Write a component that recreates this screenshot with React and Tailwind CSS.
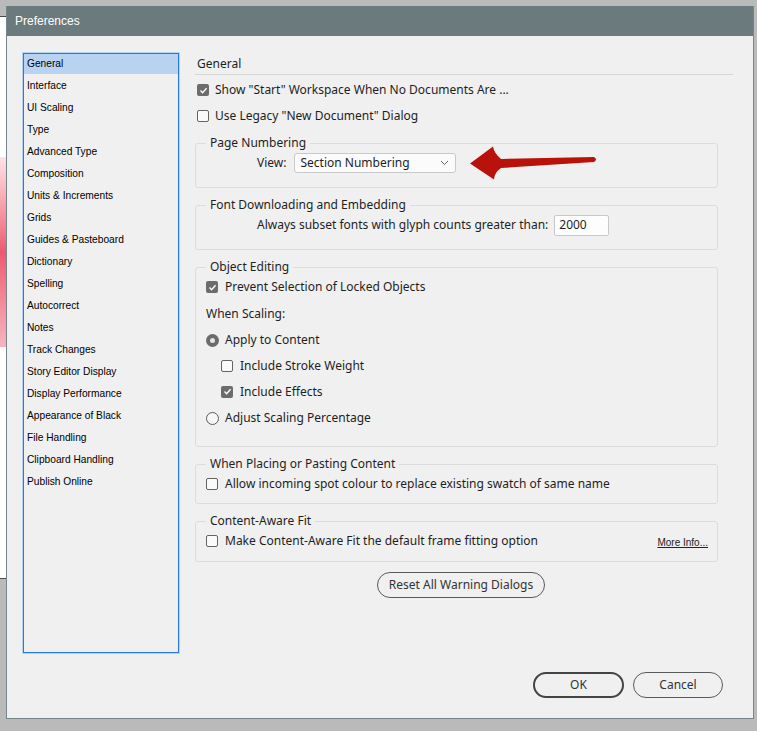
import React, { useState } from "react";

const sections = [
  "General",
  "Interface",
  "UI Scaling",
  "Type",
  "Advanced Type",
  "Composition",
  "Units & Increments",
  "Grids",
  "Guides & Pasteboard",
  "Dictionary",
  "Spelling",
  "Autocorrect",
  "Notes",
  "Track Changes",
  "Story Editor Display",
  "Display Performance",
  "Appearance of Black",
  "File Handling",
  "Clipboard Handling",
  "Publish Online",
];

const Check = ({ checked }) =>
  checked ? (
    <span className="w-[12px] h-[12px] rounded-[2px] bg-[#6c6c6c] flex items-center justify-center shrink-0">
      <svg width="9" height="9" viewBox="0 0 9 9">
        <path d="M1.5 4.6 L3.6 6.7 L7.6 2.2" fill="none" stroke="#fff" strokeWidth="1.4" />
      </svg>
    </span>
  ) : (
    <span className="w-[12px] h-[12px] rounded-[2px] border border-[#646464] bg-[#fafafa] shrink-0" />
  );

const Radio = ({ checked }) =>
  checked ? (
    <span className="w-[13px] h-[13px] rounded-full bg-[#6c6c6c] flex items-center justify-center shrink-0">
      <span className="w-[5px] h-[5px] rounded-full bg-[#e6e6e6]" />
    </span>
  ) : (
    <span className="w-[13px] h-[13px] rounded-full border border-[#5c5c5c] bg-[#f7f7f7] shrink-0" />
  );

const Group = ({ title, className = "", children }) => (
  <fieldset className={`w-[523px] border border-[#dcdcdc] rounded-[3px] ${className}`}>
    <legend className="ml-[10px] px-[4px] leading-[16px]">{title}</legend>
    {children}
  </fieldset>
);

export default function App() {
  const [active, setActive] = useState(0);

  return (
    <div
      className="relative w-[757px] h-[731px] bg-[#bababa] overflow-hidden text-[#1e1e1e]"
      style={{ fontFamily: '"Noto Sans", "Liberation Sans", sans-serif' }}
    >
      {/* document window behind the dialog */}
      <div className="absolute left-0 top-[16px] w-[40px] h-[563px] bg-white border-y border-[#4a4a4a]">
        <div className="mt-[140px] h-[190px] bg-gradient-to-b from-[#fbe3e8] via-[#ec5872] to-[#f6b3c0]" />
      </div>

      {/* dialog */}
      <div className="relative ml-[6px] mt-[6px] w-[748px] h-[713px] bg-[#f0f0f0] border-x border-b border-[#76858a] flex flex-col">
        <div
          className="h-[30px] bg-[#6b7a7d] text-white text-[12px] flex items-center pl-[8px]"
          style={{ fontFamily: '"Liberation Sans", sans-serif' }}
        >
          Preferences
        </div>

        <div className="flex pt-[16px] pl-[15px]">
          {/* section list */}
          <div className="w-[158px] h-[602px] p-px bg-[#b9d3f2]">
            <div
              className="h-full bg-[#f0f0f0] border border-[#2679e1] text-[10.2px] text-black"
              style={{ fontFamily: '"Liberation Sans", sans-serif' }}
            >
              {sections.map((s, i) => (
                <div key={s} className="h-[22px]" onClick={() => setActive(i)}>
                  <div
                    className={`h-[20px] flex items-center pl-[3px] pb-[1px] ${
                      i === active ? "bg-[#b7d3f1]" : ""
                    }`}
                  >
                    {s}
                  </div>
                </div>
              ))}
            </div>
          </div>

          {/* settings panel */}
          <div className="ml-[15px] w-[538px] text-[12px] flex flex-col">
            <div className="h-[23px] pt-[2px] leading-[20px] border-b border-[#d6d6d6] pl-[2px]">General</div>

            <label className="h-[26px] mt-[2px] flex items-center gap-[6px] pl-[2px]">
              <Check checked />
              Show "Start" Workspace When No Documents Are ...
            </label>
            <label className="h-[26px] flex items-center gap-[6px] pl-[2px]">
              <Check />
              Use Legacy "New Document" Dialog
            </label>

            <Group title="Page Numbering" className="mt-[6px] pb-[13px]">
              <div className="h-[22px] mt-[1px] flex items-center">
                <span className="ml-[61px]">View:</span>
                <div className="ml-[8px] w-[162px] h-[20px] bg-[#fbfbfb] border border-[#c9c9c9] rounded-[3px] flex items-center justify-between pl-[5px] pr-[6px]">
                  <span>Section Numbering</span>
                  <svg width="9" height="6" viewBox="0 0 9 6">
                    <path d="M1 1 L4.5 4.5 L8 1" fill="none" stroke="#666" strokeWidth="1" />
                  </svg>
                </div>
              </div>
            </Group>

            <Group title="Font Downloading and Embedding" className="mt-[9px] pb-[13px]">
              <div className="h-[22px] mt-[1px] flex items-center">
                <span className="ml-[61px]">Always subset fonts with glyph counts greater than:</span>
                <div className="ml-[6px] w-[55px] h-[21px] bg-[#fdfdfd] border border-[#c9c9c9] rounded-[2px] flex items-center pl-[4px]">
                  2000
                </div>
              </div>
            </Group>

            <Group title="Object Editing" className="mt-[9px] pb-[15px]">
              <div className="pl-[10px]">
                <label className="h-[26px] -mt-[1px] flex items-center gap-[7px]">
                  <Check checked />
                  Prevent Selection of Locked Objects
                </label>
                <div className="h-[27px] pt-[1px] flex items-center">When Scaling:</div>
                <label className="h-[26px] flex items-center gap-[6px]">
                  <Radio checked />
                  Apply to Content
                </label>
                <label className="h-[25px] flex items-center gap-[7px] pl-[15px]">
                  <Check />
                  Include Stroke Weight
                </label>
                <label className="h-[27px] flex items-center gap-[7px] pl-[15px]">
                  <Check checked />
                  Include Effects
                </label>
                <label className="h-[26px] flex items-center gap-[6px]">
                  <Radio />
                  Adjust Scaling Percentage
                </label>
              </div>
            </Group>

            <Group title="When Placing or Pasting Content" className="mt-[9px] pb-[7px]">
              <label className="h-[24px] pl-[10px] flex items-center gap-[7px]">
                <Check />
                Allow incoming spot colour to replace existing swatch of same name
              </label>
            </Group>

            <Group title="Content-Aware Fit" className="mt-[9px] pb-[8px]">
              <div className="h-[24px] pl-[10px] flex items-center">
                <label className="flex items-center gap-[7px]">
                  <Check />
                  Make Content-Aware Fit the default frame fitting option
                </label>
                <a
                  className="ml-auto mr-[9px] mt-[3px] text-[10px] underline text-[#222]"
                  style={{ fontFamily: '"Liberation Sans", sans-serif' }}
                >
                  More Info...
                </a>
              </div>
            </Group>

            <div className="w-[523px] flex justify-center pl-[9px] mt-[10px]">
              <button className="w-[168px] h-[26px] rounded-full border border-[#5a5a5a] text-[12px] text-[#333]">
                Reset All Warning Dialogs
              </button>
            </div>
          </div>
        </div>

        <div className="flex justify-end gap-[9px] pr-[30px] mt-auto mb-[20px]">
          <button className="w-[91px] h-[26px] rounded-full border-2 border-[#444] text-[12px] text-[#333]">
            OK
          </button>
          <button className="w-[90px] h-[26px] rounded-full border border-[#5a5a5a] text-[12px] text-[#333]">
            Cancel
          </button>
        </div>
      </div>

      {/* red pointer arrow */}
      <svg className="absolute inset-0 pointer-events-none" width="757" height="731" viewBox="0 0 757 731">
        <path
          d="M470 163.5 L493 146.5 Q494 153 501 159 L594 157 Q598 159.5 594 162 L501 168 Q494 173 494 179.5 Z"
          fill="#b8120a"
        />
      </svg>
    </div>
  );
}
